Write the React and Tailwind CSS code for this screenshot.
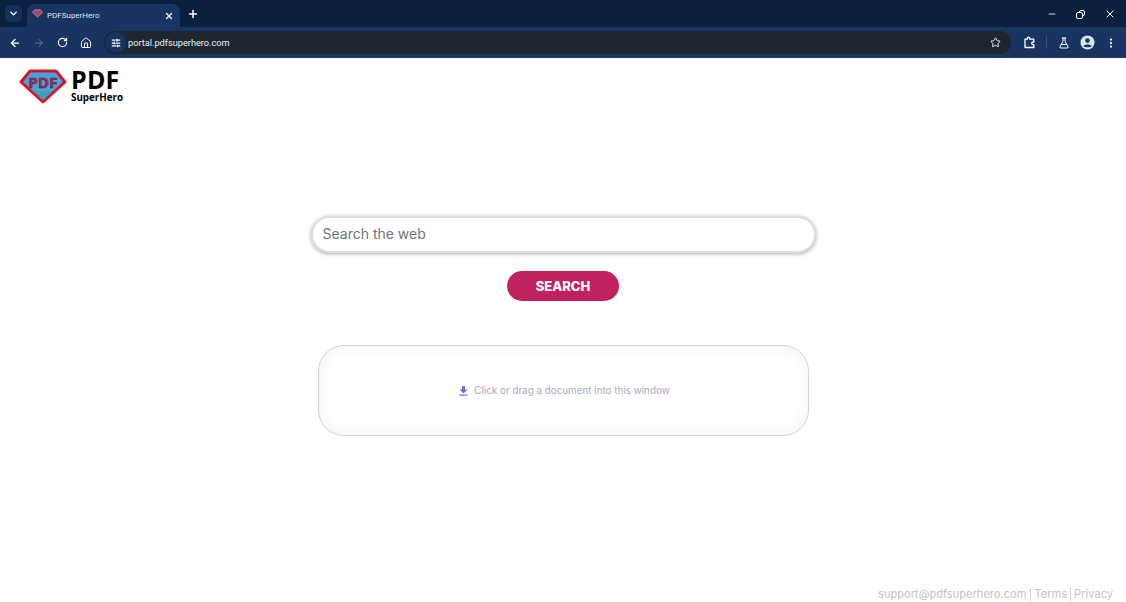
import { ArrowLeft, ArrowRight, RotateCw, Home, X, Plus, ChevronDown, Star, FlaskConical, MoreVertical, Minus, SlidersHorizontal } from 'lucide-react'

function Logo() {
  return (
    <div className="flex items-start">
      <svg width="48" height="35" viewBox="0 0 48 35" className="mt-[11px] ml-[19px]">
        <path d="M11 2 H37 L46 13 L24 33 L2 13 Z" fill="#4aa3d8" stroke="#d0182c" strokeWidth="3" strokeLinejoin="round" />
        <path d="M15 22 L33 22 L24 31 Z" fill="#3f9fb8" />
        <text x="24" y="19" textAnchor="middle" fontSize="15" fontWeight="700" fill="#c2224a" stroke="#1c2a44" strokeWidth="0.5" fontFamily="Open Sans">PDF</text>
      </svg>
      <div className="ml-[4px] flex flex-col items-start font-['Open_Sans'] font-bold text-black">
        <span className="text-[25px] leading-[25px] mt-[9px] tracking-[0.2px]">PDF</span>
        <span className="text-[9.8px] leading-[12px]">SuperHero</span>
      </div>
    </div>
  )
}

export default function App() {
  return (
    <div className="w-[1126px] h-[602px] flex flex-col bg-white overflow-hidden font-['Inter',sans-serif]">
      <div className="h-[27px] bg-[#0b1f3f] flex items-end text-white shrink-0">
        <div className="ml-[5px] mb-[5px] w-[17px] h-[17px] rounded-[5px] bg-[#15305a] flex items-center justify-center">
          <ChevronDown size={11} strokeWidth={3} />
        </div>
        <div className="ml-[5px] w-[153px] h-[23px] bg-[#173560] rounded-t-[8px] flex items-center pl-[5px] pr-[6px]">
          <svg width="11" height="9" viewBox="0 0 48 36" className="-mt-[5px]"><path d="M11 2 H37 L46 13 L24 34 L2 13 Z" fill="#a04a6c" stroke="#d0708a" strokeWidth="4" /></svg>
          <span className="ml-[4px] text-[8px] font-['Roboto'] text-[#dfe6f0] flex-1">PDFSuperHero</span>
          <X size={10} strokeWidth={3} />
        </div>
        <Plus size={12} strokeWidth={3} className="ml-[7px] mb-[7px]" />
        <div className="flex-1" />
        <div className="flex items-center mb-[7px] pr-[10px] gap-[19px]">
          <Minus size={10} strokeWidth={2} />
          <div className="relative w-[9px] h-[9px]">
            <div className="absolute right-0 top-0 w-[6px] h-[6px] border border-white rounded-[2px]" />
            <div className="absolute left-0 bottom-0 w-[7px] h-[7px] border border-white rounded-[2px] bg-[#0b1f3f]" />
          </div>
          <X size={12} strokeWidth={2} />
        </div>
      </div>
      <div className="h-[31px] bg-[#173560] flex items-center text-white shrink-0">
        <ArrowLeft size={12} strokeWidth={2.5} className="ml-[9px]" />
        <ArrowRight size={12} strokeWidth={2} className="ml-[12px] text-[#5f7aa0]" />
        <RotateCw size={11} strokeWidth={2.5} className="ml-[12px]" />
        <Home size={12} strokeWidth={2} className="ml-[12px]" />
        <div className="ml-[12px] w-[907px] h-[23px] rounded-full bg-[#1c2530] flex items-center">
          <div className="ml-[1px] w-[21px] h-[21px] rounded-full bg-[#173560] flex items-center justify-center">
            <SlidersHorizontal size={10} strokeWidth={3} />
          </div>
          <span className="ml-[2px] text-[9.2px] font-['Roboto'] text-[#eef2f7]">portal.pdfsuperhero.com</span>
          <div className="flex-1" />
          <Star size={11} strokeWidth={2} className="mr-[10px]" />
        </div>
        <svg width="13" height="13" viewBox="0 0 13 13" fill="none" stroke="currentColor" strokeWidth="1.3" className="ml-[12px]">
          <path d="M2 3.2 H4.4 V2.4 A1.2 1.2 0 0 1 6.8 2.4 V3.2 H10.8 V6 H10 A1.3 1.3 0 0 0 10 8.6 H10.8 V11.5 H2 Z" strokeLinejoin="round" />
        </svg>
        <div className="ml-[10px] w-px h-[13px] bg-[#35517c]" />
        <FlaskConical size={12} strokeWidth={2} className="ml-[11px]" />
        <svg width="15" height="15" viewBox="0 0 15 15" className="ml-[10px]">
          <circle cx="7.5" cy="7.5" r="7" fill="#d8e8fb" />
          <circle cx="7.5" cy="5.6" r="2.3" fill="#173560" />
          <path d="M3.3 11.2 C4.2 8.9 10.8 8.9 11.7 11.2 C10.5 12.6 4.5 12.6 3.3 11.2 Z" fill="#173560" />
        </svg>
        <MoreVertical size={12} strokeWidth={2.5} className="ml-[10px]" />
      </div>
      <div className="flex-1 flex flex-col relative">
        <div className="h-[158px]"><Logo /></div>
        <div className="flex flex-col items-center">
          <div className="w-[505px] h-[37px] rounded-full border-2 border-[#dedede] bg-white shadow-[0_1px_4px_rgba(0,0,0,0.35)] flex items-center pl-[10px] pb-[2px] text-[14px] text-[#70757a]">
            Search the web
          </div>
          <button className="mt-[18px] w-[112px] h-[30px] rounded-full bg-[#c0215f] text-white text-[13px] font-extrabold pt-[1px]">SEARCH</button>
          <div className="mt-[44px] w-[491px] h-[91px] rounded-[26px] border border-[#c9d6d4] bg-white shadow-[inset_0_0_16px_rgba(0,0,0,0.06)] flex items-center justify-center text-[9.85px] text-[#a9a9c4]">
            <svg width="9" height="10" viewBox="0 0 9 10" className="mr-[6px] ml-[3px] text-[#6d6be0]" fill="currentColor">
              <path d="M3 0 H6 V3.5 H8.5 L4.5 7.5 L0.5 3.5 H3 Z" />
              <rect x="0.5" y="8.5" width="8" height="1.2" />
            </svg>
            Click or drag a document into this window
          </div>
        </div>
        <div className="absolute right-[13px] bottom-0 h-[16px] flex items-center text-[11.1px] text-[#c4c4c4]">
          <span>support@pdfsuperhero.com</span>
          <span className="mx-[3.5px] h-[13px] w-px bg-[#d5d5d5]" />
          <span>Terms</span>
          <span className="mx-[3px] h-[13px] w-px bg-[#d5d5d5]" />
          <span>Privacy</span>
        </div>
      </div>
    </div>
  )
}
